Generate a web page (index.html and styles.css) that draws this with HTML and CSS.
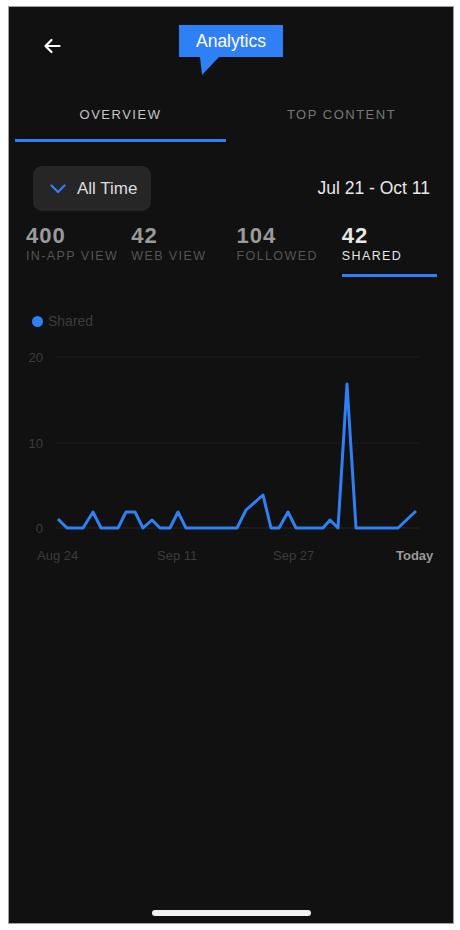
FILE: index.html
```html
<!DOCTYPE html>
<html lang="en">
<head>
    <meta charset="UTF-8">
    <meta name="viewport" content="width=device-width, initial-scale=1.0">
    <title>Analytics</title>
    <link rel="stylesheet" href="styles.css">
</head>
<body>
    <div class="phone">
        <header class="topbar">
            <button class="back" aria-label="Back">
                <svg width="18" height="18" viewBox="0 0 18 18">
                    <path d="M16.5 9H2.5M8.5 3L2.5 9l6 6" fill="none" stroke="#fff" stroke-width="2.2" stroke-linecap="round" stroke-linejoin="round"/>
                </svg>
            </button>
            <div class="bubble">Analytics</div>
        </header>

        <nav class="tabs">
            <div class="tab active">OVERVIEW</div>
            <div class="tab">TOP CONTENT</div>
        </nav>

        <div class="filters">
            <button class="range">
                <svg width="16" height="10" viewBox="0 0 16 10">
                    <path d="M1.5 1.5L8 8l6.5-6.5" fill="none" stroke="#2f80f5" stroke-width="2.2" stroke-linecap="round" stroke-linejoin="round"/>
                </svg>
                All Time
            </button>
            <span class="dates">Jul 21 - Oct 11</span>
        </div>

        <div class="stats">
            <div class="stat"><div class="num">400</div><div class="label">IN-APP VIEW</div></div>
            <div class="stat"><div class="num">42</div><div class="label">WEB VIEW</div></div>
            <div class="stat"><div class="num">104</div><div class="label">FOLLOWED</div></div>
            <div class="stat active"><div class="num">42</div><div class="label">SHARED</div></div>
        </div>

        <div class="legend"><span class="dot"></span>Shared</div>

        <svg class="chart" width="444" height="230" viewBox="0 0 444 230">
            <line class="grid" x1="46" y1="17" x2="410" y2="17"/>
            <line class="grid" x1="46" y1="103" x2="410" y2="103"/>
            <line class="grid base" x1="46" y1="188" x2="410" y2="188"/>
            <text class="axis" x="34" y="22" text-anchor="end">20</text>
            <text class="axis" x="34" y="108" text-anchor="end">10</text>
            <text class="axis" x="34" y="193" text-anchor="end">0</text>
            <polyline class="line" points="49,179 58,188 74,188 84,172 92,188 109,188 117,172 126,172 134,188 143,180 151,188 161,188 169,172 177,188 228,188 237,170 254,155 262,188 270,188 279,172 287,188 314,188 321,180 329,188 338,44 347,188 389,188 407,171"/>
            <text class="axis" x="28" y="220">Aug 24</text>
            <text class="axis" x="148" y="220">Sep 11</text>
            <text class="axis" x="264" y="220">Sep 27</text>
            <text class="axis today" x="387" y="220">Today</text>
        </svg>

        <div class="home-bar"></div>
    </div>
</body>
</html>
```

FILE: styles.css
```css
body {
    margin: 0;
    padding: 6px 0 0 8px;
    background-color: #fff;
    font-family: "Liberation Sans", Arial, sans-serif;
}
.phone {
    box-sizing: border-box;
    width: 446px;
    height: 918px;
    border: 1px solid #a0a0a0;
    background-color: #111;
    display: flex;
    flex-direction: column;
}
.topbar {
    box-sizing: border-box;
    height: 69px;
    padding-top: 18px;
    display: grid;
    grid-template-columns: 1fr auto 1fr;
    align-items: start;
}
.back {
    justify-self: start;
    margin: 12px 0 0 34px;
    padding: 0;
    border: none;
    background: none;
    line-height: 0;
}
.bubble {
    position: relative;
    height: 32px;
    padding: 0 17px;
    background-color: #2f80f5;
    color: #fff;
    font-size: 17.5px;
    line-height: 32px;
}
.bubble::after {
    content: "";
    position: absolute;
    left: 21px;
    top: 100%;
    width: 19px;
    height: 18px;
    background-color: #2f80f5;
    clip-path: polygon(0 0, 100% 0, 2px 100%);
}
.tabs {
    display: flex;
    gap: 10px;
    padding: 0 6px;
    margin-top: 31px;
}
.tab {
    flex: 1;
    text-align: center;
    font-size: 13px;
    line-height: 16px;
    letter-spacing: 1.5px;
    color: #777;
    padding-bottom: 16px;
    border-bottom: 3px solid transparent;
}
.tab.active {
    color: #c4c4c4;
    border-bottom-color: #2f80f5;
}
.filters {
    display: flex;
    justify-content: space-between;
    align-items: center;
    margin-top: 24px;
    padding: 0 23px 0 24px;
}
.range {
    display: flex;
    align-items: center;
    gap: 11px;
    box-sizing: border-box;
    width: 118px;
    height: 45px;
    padding: 0 0 0 17px;
    border: none;
    border-radius: 9px;
    background-color: #262626;
    color: #ddd;
    font-family: inherit;
    font-size: 17px;
}
.dates {
    color: #e8e8e8;
    font-size: 17.5px;
}
.stats {
    display: grid;
    grid-template-columns: repeat(4, 1fr);
    column-gap: 10px;
    margin-top: 12px;
    padding: 0 16px 0 17px;
}
.stat {
    padding-bottom: 11px;
    border-bottom: 3px solid transparent;
}
.stat .num {
    font-size: 22px;
    font-weight: bold;
    line-height: 26px;
    letter-spacing: 1px;
    color: #9a9a9a;
}
.stat .label {
    font-size: 12.5px;
    line-height: 14px;
    letter-spacing: 1.4px;
    color: #555;
}
.stat.active {
    border-bottom-color: #2f80f5;
}
.stat.active .num,
.stat.active .label {
    color: #e6e6e6;
}
.legend {
    display: flex;
    align-items: center;
    gap: 5px;
    margin-top: 36px;
    padding-left: 23px;
    font-size: 14px;
    line-height: 16px;
    color: #3c3c3c;
}
.dot {
    width: 11px;
    height: 11px;
    border-radius: 50%;
    background-color: #2f80f5;
}
.chart {
    display: block;
    margin-top: 11px;
}
.chart .grid {
    stroke: #1d1d1d;
    stroke-width: 1;
}
.chart .grid.base {
    stroke: #262626;
}
.chart .axis {
    font-family: "Liberation Sans", Arial, sans-serif;
    font-size: 13px;
    fill: #3c3c3c;
}
.chart .today {
    font-weight: bold;
    fill: #9a9a9a;
}
.chart .line {
    fill: none;
    stroke: #2f80f5;
    stroke-width: 3;
    stroke-linejoin: round;
}
.home-bar {
    width: 159px;
    height: 6px;
    margin: auto auto 7px;
    border-radius: 3px;
    background-color: #f2f2f2;
}
```
